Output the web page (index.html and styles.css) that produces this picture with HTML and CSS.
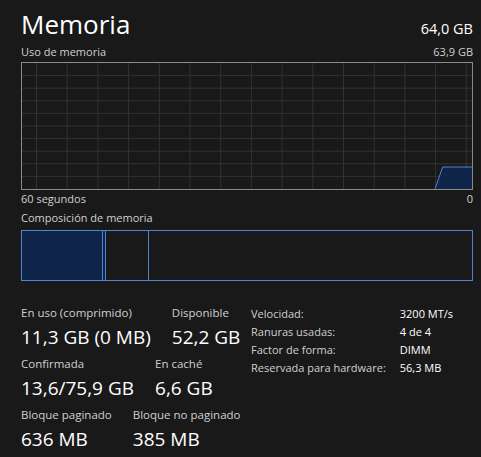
FILE: index.html
```html
<!DOCTYPE html>
<html lang="es">
<head>
<meta charset="utf-8">
<link rel="stylesheet" href="styles.css">
</head>
<body>
<div class="page">
  <div class="header">
    <div class="title">Memoria</div>
    <div class="total">64,0 GB</div>
  </div>
  <div class="caption-row top">
    <span>Uso de memoria</span>
    <span>63,9 GB</span>
  </div>
  <div class="graph">
    <svg viewBox="0 0 450 126" preserveAspectRatio="none" width="450" height="126">
      <g class="grid">
        <line x1="0" y1="12.6" x2="450" y2="12.6"/>
        <line x1="0" y1="25.2" x2="450" y2="25.2"/>
        <line x1="0" y1="37.8" x2="450" y2="37.8"/>
        <line x1="0" y1="50.4" x2="450" y2="50.4"/>
        <line x1="0" y1="63" x2="450" y2="63"/>
        <line x1="0" y1="75.6" x2="450" y2="75.6"/>
        <line x1="0" y1="88.2" x2="450" y2="88.2"/>
        <line x1="0" y1="100.8" x2="450" y2="100.8"/>
        <line x1="0" y1="113.4" x2="450" y2="113.4"/>
        <line x1="14.5" y1="0" x2="14.5" y2="126"/>
        <line x1="45.2" y1="0" x2="45.2" y2="126"/>
        <line x1="75.9" y1="0" x2="75.9" y2="126"/>
        <line x1="106.6" y1="0" x2="106.6" y2="126"/>
        <line x1="137.3" y1="0" x2="137.3" y2="126"/>
        <line x1="168" y1="0" x2="168" y2="126"/>
        <line x1="198.7" y1="0" x2="198.7" y2="126"/>
        <line x1="229.4" y1="0" x2="229.4" y2="126"/>
        <line x1="260.1" y1="0" x2="260.1" y2="126"/>
        <line x1="290.8" y1="0" x2="290.8" y2="126"/>
        <line x1="321.5" y1="0" x2="321.5" y2="126"/>
        <line x1="352.2" y1="0" x2="352.2" y2="126"/>
        <line x1="382.9" y1="0" x2="382.9" y2="126"/>
        <line x1="413.6" y1="0" x2="413.6" y2="126"/>
        <line x1="444.3" y1="0" x2="444.3" y2="126"/>
      </g>
      <polygon class="area" points="413,126 420.7,104 450,104 450,126"/>
      <polyline class="stroke" points="413,126 420.7,104 450,104"/>
    </svg>
  </div>
  <div class="caption-row bottom">
    <span>60 segundos</span>
    <span>0</span>
  </div>
  <div class="caption-row comp">
    <span>Composición de memoria</span>
  </div>
  <div class="bar">
    <div class="seg inuse"></div>
    <div class="seg modified"></div>
    <div class="seg standby"></div>
    <div class="seg free"></div>
  </div>
  <div class="stats">
    <div class="stats-left">
      <div class="row">
        <div class="stat"><div class="label">En uso (comprimido)</div><div class="value">11,3 GB (0 MB)</div></div>
        <div class="stat"><div class="label">Disponible</div><div class="value">52,2 GB</div></div>
      </div>
      <div class="row">
        <div class="stat"><div class="label">Confirmada</div><div class="value">13,6/75,9 GB</div></div>
        <div class="stat"><div class="label">En caché</div><div class="value">6,6 GB</div></div>
      </div>
      <div class="row">
        <div class="stat"><div class="label">Bloque paginado</div><div class="value">636 MB</div></div>
        <div class="stat"><div class="label">Bloque no paginado</div><div class="value">385 MB</div></div>
      </div>
    </div>
    <div class="stats-right">
      <span class="k">Velocidad:</span><span class="v">3200 MT/s</span>
      <span class="k">Ranuras usadas:</span><span class="v">4 de 4</span>
      <span class="k">Factor de forma:</span><span class="v">DIMM</span>
      <span class="k">Reservada para hardware:</span><span class="v">56,3 MB</span>
    </div>
  </div>
</div>
</body>
</html>
```

FILE: styles.css
```css
html, body {
  margin: 0;
  padding: 0;
  background: #191919;
}
body {
  font-family: "Open Sans", "Noto Sans", sans-serif;
  color: #ffffff;
  width: 481px;
  height: 457px;
  overflow: hidden;
}
.page {
  padding: 0 8px 0 21px;
}
.header {
  display: flex;
  justify-content: space-between;
  align-items: baseline;
  padding-top: 6px;
}
.title {
  font-size: 26px;
  line-height: 36px;
  color: #ffffff;
}
.total {
  font-size: 14.5px;
  line-height: 20px;
  color: #ffffff;
}
.caption-row {
  display: flex;
  justify-content: space-between;
  font-size: 11px;
  line-height: 14px;
  color: #d0d0d0;
}
.caption-row.top { margin-top: 3px; }
.caption-row.bottom { margin-top: 2px; }
.caption-row.comp { margin-top: 5px; }
.graph {
  margin-top: 3px;
  height: 126px;
  border: 1px solid #8a8a8a;
  box-sizing: content-box;
}
.graph svg {
  display: block;
  width: 100%;
  height: 100%;
}
.grid line {
  stroke: #323232;
  stroke-width: 1;
}
.area {
  fill: #0e2448;
}
.stroke {
  fill: none;
  stroke: #4f85cf;
  stroke-width: 1;
}
.bar {
  margin-top: 5px;
  height: 49px;
  border: 1px solid #4f85cf;
  display: flex;
}
.seg {
  border-right: 1px solid #4f85cf;
}
.seg.inuse { width: 80px; background: #0e2448; }
.seg.modified { width: 2px; background: #0e2448; }
.seg.standby { width: 42px; }
.seg.free { flex: 1; border-right: none; }
.stats {
  margin-top: 24px;
  display: flex;
}
.stats-left {
  flex: 0 0 230px;
  display: flex;
  flex-direction: column;
  gap: 8px;
  white-space: nowrap;
}
.row {
  display: flex;
  gap: 21px;
}
.label {
  font-size: 11.5px;
  line-height: 15px;
  color: #d0d0d0;
}
.value {
  margin-top: 6px;
  font-size: 19px;
  line-height: 22px;
  color: #ffffff;
}
.stats-right {
  display: grid;
  grid-template-columns: auto auto;
  column-gap: 14px;
  align-content: start;
  font-size: 11px;
  line-height: 18px;
  white-space: nowrap;
}
.stats-right .k { color: #d0d0d0; }
.stats-right .v { color: #ffffff; }
```
